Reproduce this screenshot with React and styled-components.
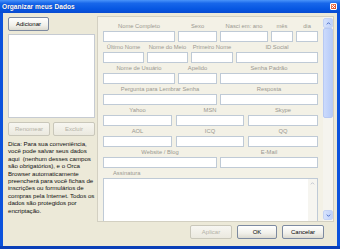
import React from 'react';
import styled, { createGlobalStyle } from 'styled-components';

const GlobalStyle = createGlobalStyle`
  html, body {
    margin: 0;
    padding: 0;
    width: 340px;
    height: 249px;
    overflow: hidden;
    background: #0a4fd8;
  }
`;

const Window = styled.div`
  width: 340px;
  height: 249px;
  box-sizing: border-box;
  display: flex;
  flex-direction: column;
  background: #0b52dc;
  border-bottom: 3px solid #0a3fb8;
  font-family: 'Liberation Sans', Arial, sans-serif;
`;

const TitleBar = styled.div`
  height: 13px;
  flex: none;
  display: flex;
  align-items: center;
  justify-content: space-between;
  padding: 0 3px 0 2px;
  background: linear-gradient(#4a94fa 0%, #1867ea 25%, #0656e2 70%, #0a4bcf 100%);
`;

const Title = styled.span`
  color: #fff;
  font-weight: bold;
  font-size: 6.6px;
  letter-spacing: 0.05px;
  text-shadow: 0 0 1px #0a2c8a;
`;

const CloseButton = styled.div`
  width: 7px;
  height: 7px;
  box-sizing: border-box;
  border: 1px solid #fff;
  border-radius: 1px;
  background: linear-gradient(135deg, #f08a6a, #d6431c);
  display: flex;
  align-items: center;
  justify-content: center;
`;

const Client = styled.div`
  flex: 1;
  margin: 0 3px;
  background: #ece9d8;
  display: flex;
  flex-direction: column;
  padding: 3px 3px 0 5px;
  min-height: 0;
`;

const Main = styled.div`
  display: flex;
  gap: 2px;
  height: 206px;
`;

const LeftColumn = styled.div`
  width: 87px;
  flex: none;
  display: flex;
  flex-direction: column;
  padding-top: 1px;
`;

const Button = styled.button`
  width: ${(p) => p.$w}px;
  height: 14px;
  box-sizing: border-box;
  padding: 0;
  border: 1px solid ${(p) => (p.disabled ? '#c9c7ba' : '#7d8aa0')};
  border-radius: 2px;
  background: ${(p) =>
    p.disabled
      ? 'linear-gradient(#f7f6f1, #ebe9df)'
      : 'linear-gradient(#ffffff, #f1f0ea 60%, #dcdad0)'};
  color: ${(p) => (p.disabled ? '#b4b2a6' : '#000')};
  font-family: 'Liberation Sans', Arial, sans-serif;
  font-size: 6px;
  line-height: 12px;
  text-align: center;
`;

const ListBox = styled.div`
  margin-top: 3px;
  height: 84px;
  background: #fff;
  border: 1px solid #c6cbd2;
  box-sizing: border-box;
`;

const ButtonPair = styled.div`
  margin-top: 4px;
  display: flex;
  gap: 3px;
`;

const Tip = styled.p`
  margin: 4px 0 0;
  font-size: 6.2px;
  line-height: 7.4px;
  color: #111;
  letter-spacing: -0.05px;
`;

const Panel = styled.div`
  flex: 1;
  display: flex;
  border: 1px solid #d3d0c2;
  background: #f3f1e6;
  min-width: 0;
`;

const Form = styled.div`
  flex: 1;
  overflow: hidden;
  padding: 5px 5px 0 5px;
  display: flex;
  flex-direction: column;
  gap: 1px;
`;

const Row = styled.div`
  display: grid;
  grid-template-columns: ${(p) => p.$cols};
  column-gap: ${(p) => p.$gap || 3}px;
`;

const Field = styled.div`
  display: flex;
  flex-direction: column;
`;

const Label = styled.div`
  height: 9px;
  line-height: 8px;
  font-size: 5.8px;
  color: #9a9890;
  text-align: ${(p) => p.$align || 'center'};
  padding-left: ${(p) => (p.$align === 'left' ? 10 : 0)}px;
  white-space: nowrap;
`;

const Input = styled.div`
  height: 11px;
  box-sizing: border-box;
  background: #fff;
  border: 1px solid #bfcad6;
`;

const TextArea = styled.div`
  height: 48px;
  box-sizing: border-box;
  background: #fff;
  border: 1px solid #bfcad6;
  display: flex;
  justify-content: flex-end;
`;

const InnerScroll = styled.div`
  width: 9px;
  background: #f6f5f0;
  display: flex;
  flex-direction: column;
`;

const InnerArrow = styled.div`
  height: 9px;
  display: flex;
  align-items: center;
  justify-content: center;
`;

const ScrollBar = styled.div`
  width: 10px;
  flex: none;
  background: #f5f4ee;
  display: flex;
  flex-direction: column;
  padding: 1px 0;
  box-sizing: border-box;
`;

const ScrollButton = styled.div`
  height: 10px;
  box-sizing: border-box;
  border: 1px solid #c4d3f4;
  border-radius: 2px;
  background: linear-gradient(90deg, #d6e2fc, #c0d2fa);
  display: flex;
  align-items: center;
  justify-content: center;
`;

const Thumb = styled.div`
  height: 90px;
  box-sizing: border-box;
  border: 1px solid #b7c9f3;
  border-radius: 2px;
  background: linear-gradient(90deg, #cbdafc, #b6cbf8);
`;

const Track = styled.div`
  flex: 1;
`;

const Footer = styled.div`
  display: flex;
  justify-content: flex-end;
  gap: 5px;
  margin-top: 3px;
  padding-right: 10px;
`;

const Chevron = ({ up, color = '#4d6fc6', size = 5 }) => (
  <svg width={size} height={size} viewBox="0 0 6 6">
    <path
      d={up ? 'M1 4 L3 2 L5 4' : 'M1 2 L3 4 L5 2'}
      fill="none"
      stroke={color}
      strokeWidth="1.2"
    />
  </svg>
);

const rows = [
  { cols: '72px 39px 48px 22px 22px', labels: ['Nome Completo', 'Sexo', 'Nasci em: ano', 'mês', 'dia'] },
  { cols: '41px 41px 42px 82px', labels: ['Último Nome', 'Nome do Meio', 'Primeiro Nome', 'ID Social'] },
  { cols: '72px 39px 98px', labels: ['Nome de Usuário', 'Apelido', 'Senha Padrão'] },
  { cols: '114px 98px', labels: ['Pergunta para Lembrar Senha', 'Resposta'] },
  { cols: '69px 68px 70px', gap: 4, labels: ['Yahoo', 'MSN', 'Skype'] },
  { cols: '69px 68px 70px', gap: 4, labels: ['AOL', 'ICQ', 'QQ'] },
  { cols: '114px 98px', labels: ['Website / Blog', 'E-Mail'] },
];

const App = () => {
  return (
    <>
      <GlobalStyle />
      <Window>
        <TitleBar>
          <Title>Organizar meus Dados</Title>
          <CloseButton>
            <svg width="5" height="5" viewBox="0 0 5 5">
              <path d="M1 1 L4 4 M4 1 L1 4" stroke="#fff" strokeWidth="1" />
            </svg>
          </CloseButton>
        </TitleBar>
        <Client>
          <Main>
            <LeftColumn>
              <Button $w={41}>Adicionar</Button>
              <ListBox />
              <ButtonPair>
                <Button $w={42} disabled>Renomear</Button>
                <Button $w={42} disabled>Excluir</Button>
              </ButtonPair>
              <Tip>
                Dica: Para sua conveniência, você pode salvar seus dados
                aqui&nbsp; (nenhum desses campos são obrigatórios), e o Orca
                Browser automaticamente preencherá para você fichas de
                inscrições ou formulários de compras pela Internet. Todos os
                dados são protegidos por encriptação.
              </Tip>
            </LeftColumn>
            <Panel>
              <Form>
                {rows.map((row, i) => (
                  <Row key={i} $cols={row.cols} $gap={row.gap}>
                    {row.labels.map((label) => (
                      <Field key={label}>
                        <Label>{label}</Label>
                        <Input />
                      </Field>
                    ))}
                  </Row>
                ))}
                <Field>
                  <Label $align="left">Assinatura</Label>
                  <TextArea>
                    <InnerScroll>
                      <InnerArrow>
                        <Chevron up color="#c3c6d0" />
                      </InnerArrow>
                    </InnerScroll>
                  </TextArea>
                </Field>
              </Form>
              <ScrollBar>
                <ScrollButton>
                  <Chevron up />
                </ScrollButton>
                <Thumb />
                <Track />
                <ScrollButton>
                  <Chevron />
                </ScrollButton>
              </ScrollBar>
            </Panel>
          </Main>
          <Footer>
            <Button $w={42} disabled>Aplicar</Button>
            <Button $w={40}>OK</Button>
            <Button $w={42}>Cancelar</Button>
          </Footer>
        </Client>
      </Window>
    </>
  );
};

export default App;
